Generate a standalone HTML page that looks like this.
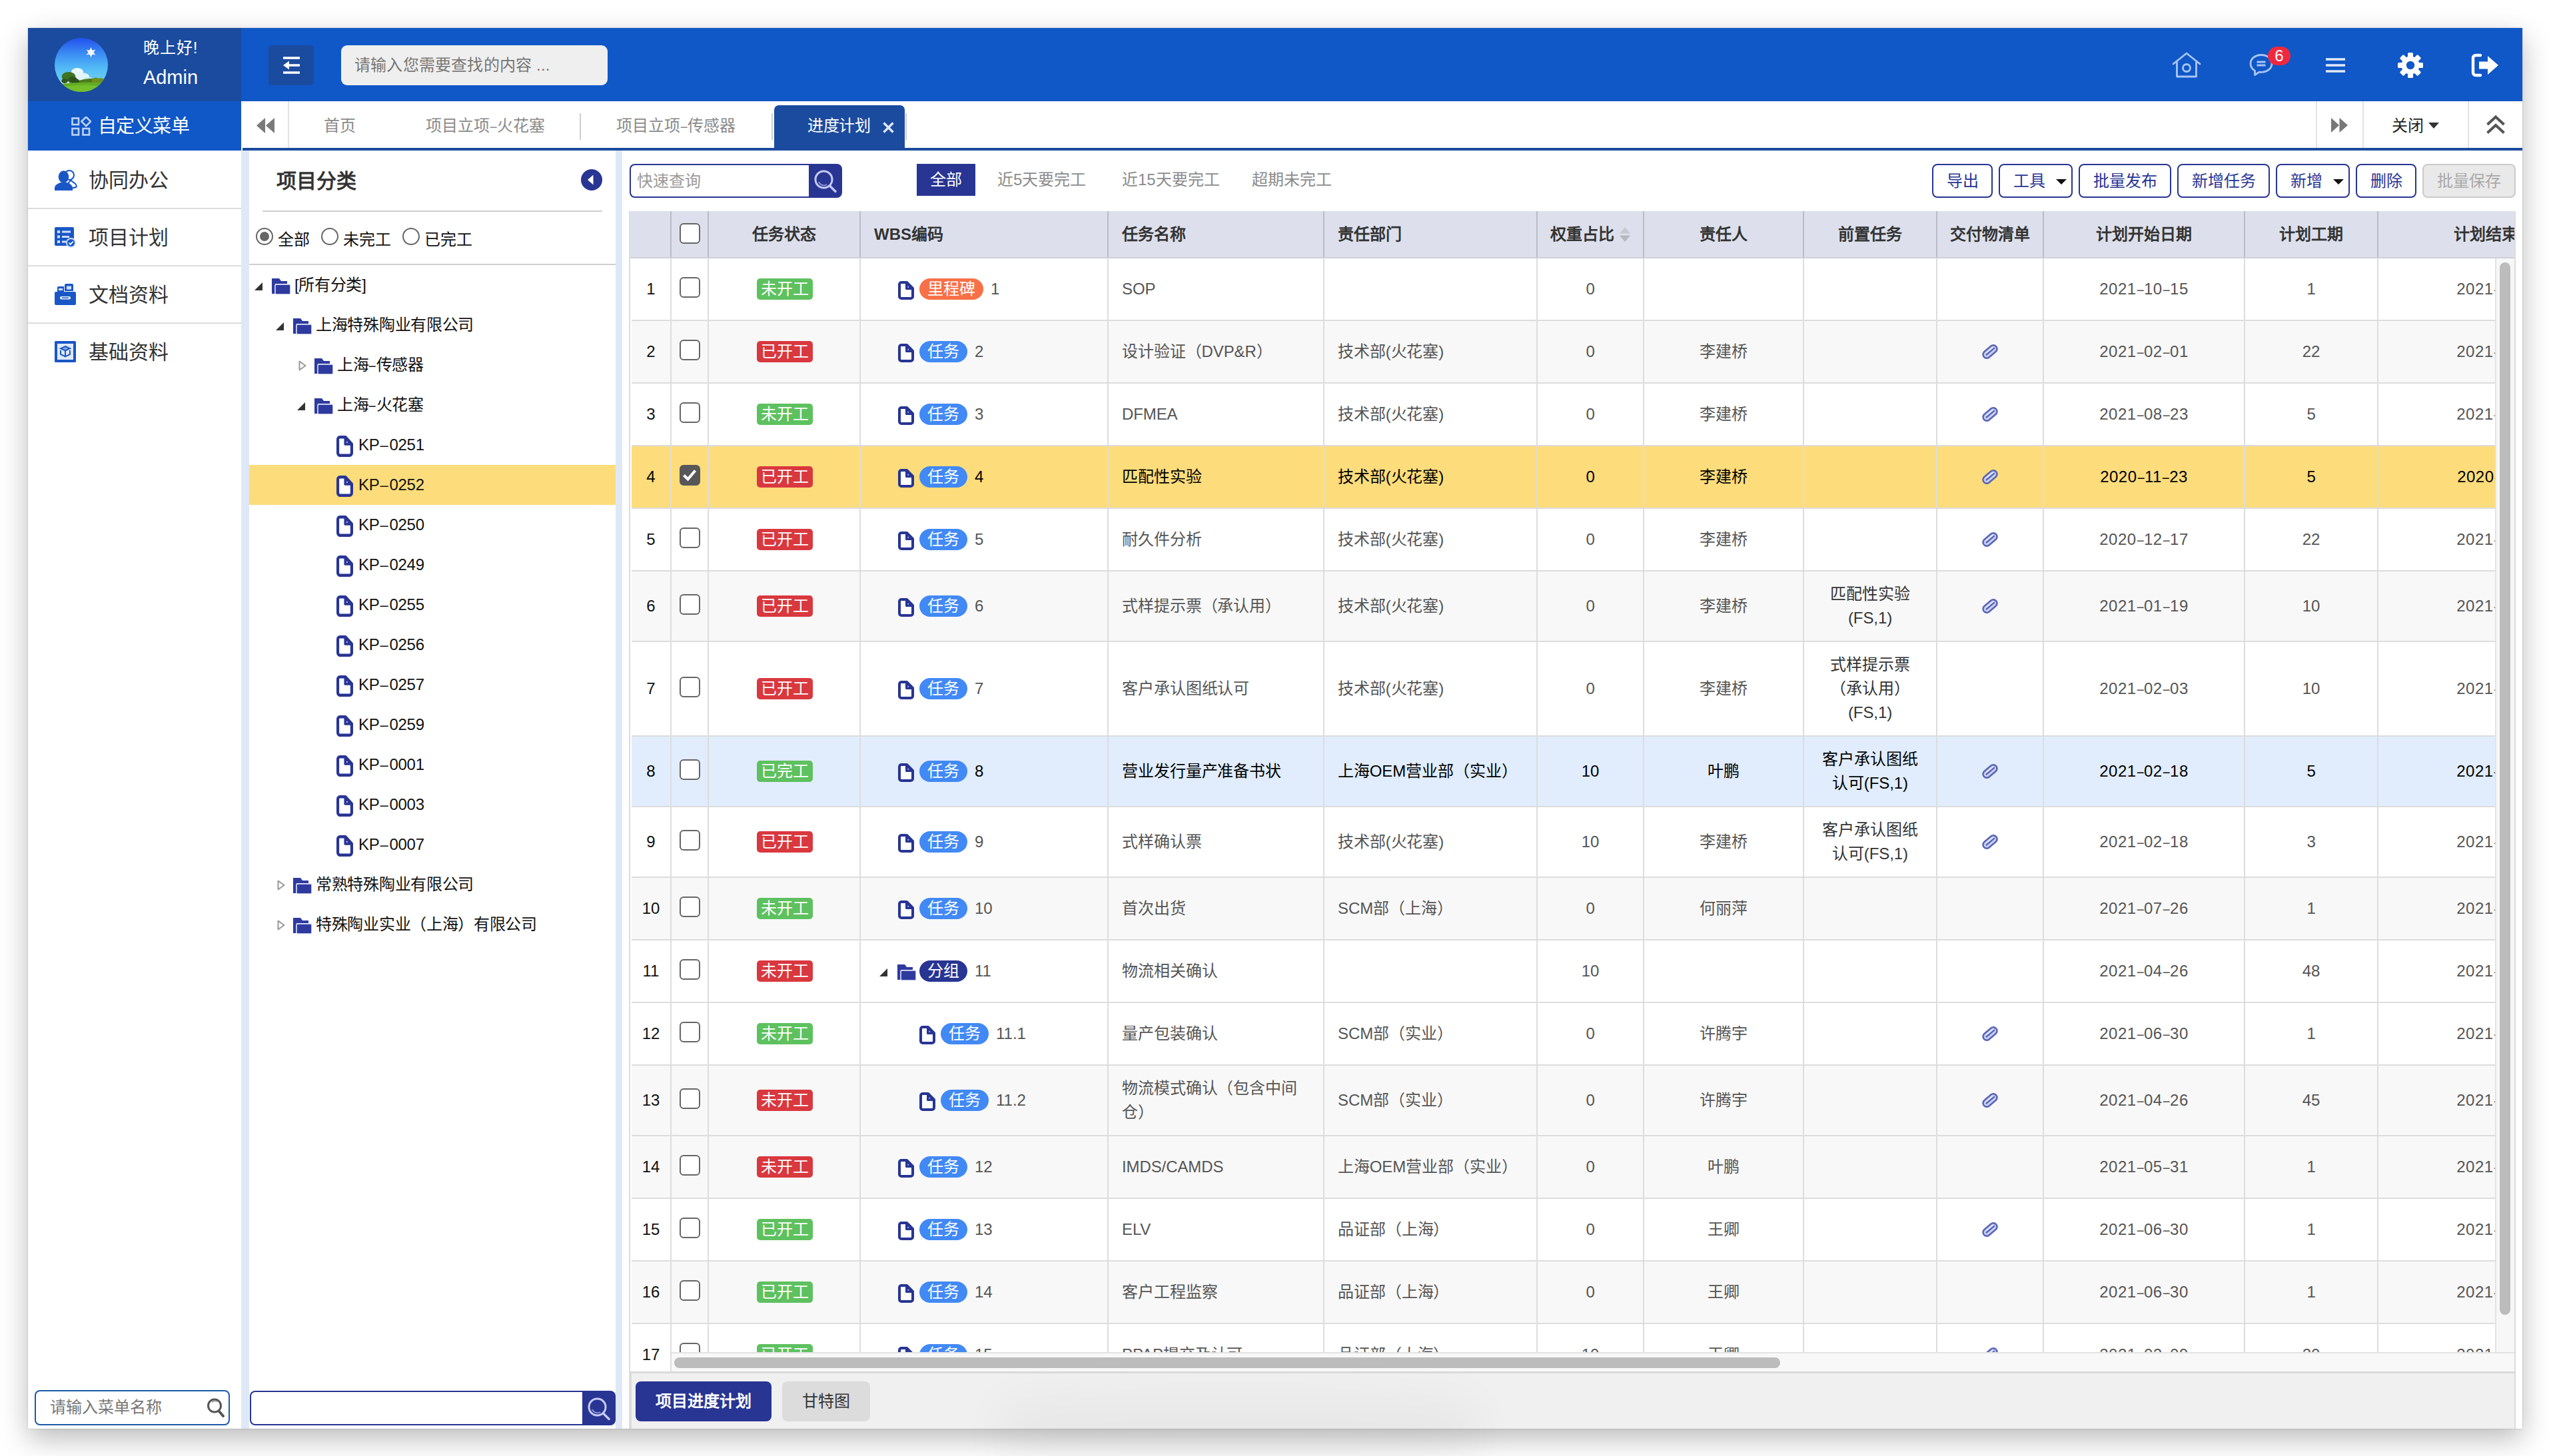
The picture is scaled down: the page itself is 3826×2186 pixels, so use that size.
<!DOCTYPE html>
<html lang="zh-CN">
<head>
<meta charset="utf-8">
<title>进度计划</title>
<style>
*{box-sizing:border-box;margin:0;padding:0}
html,body{width:3826px;height:2186px;overflow:hidden;background:#fff}
body{position:relative;font-family:"Liberation Sans",sans-serif;font-size:24px;color:#333;line-height:1.2;-webkit-font-smoothing:antialiased}
.abs{position:absolute}
.d{display:inline-block;transform:scaleX(.74);margin:0 -1px;letter-spacing:0}
#shadow{position:absolute;left:42px;top:42px;width:3744px;height:2103px;background:#fff;box-shadow:0 15px 40px rgba(0,0,0,.27),0 0 2px rgba(0,0,0,.22)}
#blob{position:absolute;left:1560px;top:2150px;width:600px;height:10px;border-radius:50%;background:rgba(0,0,0,.035);box-shadow:0 0 70px 60px rgba(0,0,0,.035);z-index:5;pointer-events:none}
#win{position:absolute;left:0;top:0;width:3826px;height:2186px;clip-path:inset(42px 40px 41px 42px)}
/* header */
#hdL{left:42px;top:42px;width:320px;height:110px;background:#1b4b9f}
#hdR{left:362px;top:42px;width:3424px;height:110px;background:#1057c7}
#avatar{left:82px;top:57px;width:80px;height:81px}
.hello{left:176px;width:160px;text-align:center;color:#fff;white-space:nowrap}
#collapse{left:403px;top:68px;width:68px;height:60px;background:#1b4b9f;border-radius:5px}
#gsearch{left:512px;top:68px;width:400px;height:60px;background:#efefef;border-radius:9px;color:#767676;font-size:24px;line-height:60px;padding-left:20px;white-space:nowrap;overflow:hidden;letter-spacing:.2px}
/* custom menu bar */
#cmenu{left:42px;top:152px;width:320px;height:74px;background:#1057c7;color:#fff;font-size:28px;line-height:74px;white-space:nowrap}
/* sidebar */
#side{left:42px;top:226px;width:320px;height:1919px;background:#fff}
.mi{position:absolute;left:0;width:320px;height:86px;border-bottom:2px solid #dcdcdc}
.mi svg{position:absolute;left:40px;top:26px}
.mi span{position:absolute;left:91px;top:0;line-height:86px;font-size:30px;color:#333;white-space:nowrap}
#sidesearch{left:52px;top:2087px;width:293px;height:53px;border:2px solid #1c5aa8;border-radius:8px;background:#fff;color:#777;font-size:24px;line-height:48px;padding-left:21px;white-space:nowrap;overflow:hidden}
/* tabs */
#tabbar{left:362px;top:152px;width:3424px;height:70px;background:#fff}
#tabline{left:364px;top:222px;width:3422px;height:4px;background:#1b4b9f}
.vsep{position:absolute;width:2px;background:#e3e3e3}
.tab{position:absolute;top:152px;height:70px;line-height:74px;font-size:24px;color:#8a8a8a;white-space:nowrap}
#tabact{left:1162px;top:158px;width:196px;height:66px;background:#1b4b9f;border-radius:7px 7px 0 0}
/* gutter + tree */
#gutter{left:362px;top:226px;width:572px;height:1919px;background:#dfe8f6}
#treep{left:374px;top:226px;width:550px;height:1919px;background:#fff}
#ttitle{left:415px;top:252px;font-size:30px;font-weight:bold;color:#333;line-height:40px;white-space:nowrap}
.hr{position:absolute;height:2px;background:#cfcfcf}
.radio{position:absolute;top:342px;width:26px;height:26px;border:2px solid #666;border-radius:50%;background:#fff}
.radio.on:after{content:"";position:absolute;left:4px;top:4px;width:14px;height:14px;border-radius:50%;background:#666}
.rl{position:absolute;top:345px;line-height:30px;font-size:24px;color:#111;white-space:nowrap}
#tree{left:374px;top:398px;width:550px;height:1030px}
.tr{position:relative;height:60px;width:550px}
.tr.sel{background:#fddc7b}
.ta,.ti{position:absolute;line-height:0}
.tt{position:absolute;top:0;line-height:60px;font-size:24px;color:#111;white-space:nowrap;letter-spacing:-.3px}
.tt.k{letter-spacing:-.3px}
.d2{display:inline-block;transform:scaleX(.92);margin:0 1px}
.sbox{position:absolute;border:2px solid #283593;border-radius:8px 0 0 8px;background:#fff;border-right:none}
.sbtn{position:absolute;background:#283593;border-radius:0 8px 8px 0}
/* main */
#main{left:934px;top:226px;width:2852px;height:1919px;background:#fff}
.btn{position:absolute;top:246px;height:51px;border:2px solid #283593;border-radius:8px;color:#283593;font-size:24px;line-height:47px;text-align:center;white-space:nowrap;background:#fff}
.btn.cb2{text-align:left;padding-left:20px}
.btn.dis{border-color:#cacaca;background:#e9e9e9;color:#a9a9a9}
.caret{display:inline-block;width:0;height:0;border-left:8px solid transparent;border-right:8px solid transparent;border-top:8px solid #111;vertical-align:middle;margin-left:16px;margin-top:-2px}
.flt{position:absolute;top:246px;line-height:48px;font-size:24px;color:#8b8b8b;white-space:nowrap}
#fall{left:1376px;top:246px;width:88px;height:48px;background:#283593;color:#fff;text-align:center;line-height:48px;font-size:24px}
/* grid */
#grid{left:946px;top:317px;width:2830px;height:1745px;background:#f8f8f8;overflow:hidden;border-right:2px solid #dcdcdc}
#ghead{position:absolute;left:0;top:0;width:2830px;height:71px;background:#dde0ec;display:flex;border-bottom:2px solid #cfd1d8}
.h{height:69px;border-right:2px solid #b9bcc7;font-weight:bold;font-size:24px;color:#333;line-height:70px;text-align:center;white-space:nowrap;flex:none;overflow:hidden}
.h.l{text-align:left;padding-left:20px}
#gnum{position:absolute;left:0;top:71px;width:62px;height:1672px;background:#fff;padding-left:2px;overflow:hidden}
.nrow{border-bottom:2px solid #ddd;border-right:2px solid #ddd;display:flex;align-items:center;justify-content:center;color:#111;font-size:24px;background:#fff}
#gbody{position:absolute;left:62px;top:71px;width:2737px;height:1642px;overflow:hidden;background:#fff}
.row{display:flex;width:2932px;border-bottom:2px solid #ddd;background:#fff;color:#555}
.alt{background:#f8f8f8}
.row.sel,.nrow.sel{background:#fddc7b;color:#000}
.row.hov,.nrow.hov{background:#e1edfd;color:#000}
.c{flex:none;height:100%;border-right:2px solid #ddd;display:flex;align-items:center;justify-content:center;font-size:24px;white-space:nowrap;overflow:hidden;letter-spacing:-.1px}
.c.l{justify-content:flex-start;padding-left:20px;line-height:36px}
.c1{width:56px}.c2{width:228px;padding-left:2px}.c3{width:372px;justify-content:flex-start}.c4{width:324px}.c5{width:320px}.c6{width:160px}.c7{width:240px}.c8{width:200px}.c9{width:160px}.c10{width:302px;letter-spacing:.5px}.c11{width:200px}.c12{width:370px;letter-spacing:.5px}
.pre{line-height:36px;text-align:center;color:#333}
.sel .pre,.hov .pre{color:#000}
.cb{display:block;width:31px;height:31px;border:2px solid #666;border-radius:6px;background:#fff;margin-top:-5px;margin-left:1px}
.cb.on{background:#585858;border-color:#585858;position:relative}
.cb.on svg{position:absolute;left:-2px;top:-2px}
.tag{display:block;width:84px;height:32px;border-radius:5px;color:#fff;font-size:24px;line-height:32px;text-align:center;letter-spacing:0;margin-top:0}
.tag.g{background:#5ec15f}.tag.r{background:#d9383f}
.pill{display:block;height:32px;border-radius:16px;color:#fff;font-size:24px;line-height:32px;text-align:center;letter-spacing:0;margin-left:8px;margin-top:0;flex:none}
.pill.ms{width:96px;background:#f87047}.pill.tk{width:72px;background:#4189f5}.pill.gp{width:72px;background:#283593}
.wn{margin-left:11px;margin-top:0;letter-spacing:0}
.wdoc{flex:none;margin-top:4px}
.wfold{flex:none;margin-top:4px;margin-left:14px;margin-right:-3px}
.wa{display:block;width:12px;height:12px;line-height:0;margin-left:-25px;margin-top:4px;flex:none}
.clip{flex:none}
#vscroll{position:absolute;left:2799px;top:71px;width:31px;height:1642px;background:#f7f7f7;border-left:2px solid #e3e3e3}
#vthumb{position:absolute;left:5px;top:6px;width:16px;height:1580px;border-radius:8px;background:#bcbcbc}
#hscroll{position:absolute;left:62px;top:1713px;width:2768px;height:30px;background:#f8f8f8;border-top:2px solid #e3e3e3}
#hthumb{position:absolute;left:4px;top:6px;width:1660px;height:16px;border-radius:8px;background:#bcbcbc}
#gbot{position:absolute;left:0;top:1742px;width:2830px;height:3px;background:#dadada}
/* bottom tabs */
#btabs{left:948px;top:2062px;width:2828px;height:83px;background:#f0f0f0;border-right:2px solid #dcdcdc}
#bt1{left:954px;top:2074px;width:204px;height:60px;background:#283593;border-radius:8px;color:#fff;font-weight:bold;font-size:24px;line-height:60px;text-align:center;white-space:nowrap}
#bt2{left:1174px;top:2074px;width:132px;height:60px;background:#dcdcdc;border-radius:8px;color:#333;font-size:24px;line-height:60px;text-align:center;white-space:nowrap}
</style>
</head>
<body>
<div id="shadow"></div>
<div id="blob"></div>
<div id="win">
<!-- header -->
<div id="hdL" class="abs"></div>
<div id="hdR" class="abs"></div>
<svg id="avatar" class="abs" viewBox="0 0 80 81" preserveAspectRatio="none">
<defs><linearGradient id="sky" x1="0" y1="0" x2="0" y2="1"><stop offset="0" stop-color="#2350ee"/><stop offset=".28" stop-color="#3a8af3"/><stop offset=".55" stop-color="#52b9f5"/><stop offset=".8" stop-color="#6ccff6"/></linearGradient><clipPath id="cc"><ellipse cx="40" cy="40.500" rx="40" ry="40.500"/></clipPath></defs>
<g clip-path="url(#cc)"><rect width="80" height="81" fill="url(#sky)"/>
<ellipse cx="34" cy="51" rx="9" ry="6" fill="#eaf8fd"/><ellipse cx="40" cy="58" rx="12" ry="6" fill="#e2f5fc"/><ellipse cx="50" cy="62" rx="7" ry="3.500" fill="#c9ecfa"/>
<ellipse cx="16" cy="65" rx="7" ry="4" fill="#f2fafd"/>
<path d="M30 66Q50 58 78 62V70H30z" fill="#4c7a1e"/>
<path d="M56 62q5-5 10-1q5-3 9 2v5H56z" fill="#6f8f1f"/>
<ellipse cx="21" cy="58" rx="10.500" ry="7" fill="#3f7423"/><ellipse cx="27" cy="63" rx="7" ry="5" fill="#2e5a1b"/><ellipse cx="15" cy="64.500" rx="5" ry="3.500" fill="#2e5a1b"/><ellipse cx="31" cy="65" rx="6" ry="4" fill="#2c531a"/>
<path d="M0 70Q40 64 80 68V81H0z" fill="#63ad22"/>
<path d="M8 74Q40 68 74 73V81H8z" fill="#74bf2a"/>
<g opacity=".96"><path d="M54.500 14l2 4.600 5-.9-3.200 3.900 3.200 3.900-5-.9-2 4.600-2-4.600-5 .9 3.200-3.900-3.200-3.900 5 .9z" fill="#fff"/><circle cx="54.500" cy="21.600" r="3.400" fill="#fff"/></g></g></svg>
<div class="abs hello" style="top:56px;font-size:24px;line-height:32px;letter-spacing:1px">晚上好!</div>
<div class="abs hello" style="top:98px;font-size:29px;line-height:36px">Admin</div>
<div id="collapse" class="abs"><svg class="abs" style="left:22px;top:17px" width="25" height="26" viewBox="0 0 25 26"><path d="M0 2H25M9 13H25M0 24H25" stroke="#fff" stroke-width="3.6" fill="none"/><path d="M0 13L9 6.500V19.500z" fill="#fff"/></svg></div>
<div id="gsearch" class="abs">请输入您需要查找的内容 ...</div>
<!-- header icons -->
<svg class="abs" style="left:3260px;top:78px" width="44" height="40" viewBox="0 0 44 40"><path d="M2 18L22 2L42 18M7.500 15V37H36.500V15" fill="none" stroke="#a9c5f3" stroke-width="2.800" stroke-linejoin="round" stroke-linecap="round"/><circle cx="22" cy="24" r="5.500" fill="none" stroke="#a9c5f3" stroke-width="2.800"/></svg>
<svg class="abs" style="left:3376px;top:80px" width="36" height="36" viewBox="0 0 36 36"><path d="M18 2.500C9 2.500 2 8 2 15.500c0 4.500 2.600 8.300 6.500 10.600L8.500 32.500l6.500-4.400c1 .2 2 .3 3 .3 9 0 16-5.500 16-13S27 2.500 18 2.500z" fill="none" stroke="#a9c5f3" stroke-width="2.800" stroke-linejoin="round"/><path d="M11.500 13H24.500M11.500 18H24.500" stroke="#a9c5f3" stroke-width="2.800"/></svg>
<div class="abs" style="left:3404px;top:70px;width:34px;height:28px;border-radius:14px;background:#f0283f;color:#fff;font-size:24px;line-height:28px;text-align:center">6</div>
<svg class="abs" style="left:3491px;top:87px" width="29" height="22" viewBox="0 0 29 22"><path d="M0 2H29M0 11H29M0 20H29" stroke="#e1ebfb" stroke-width="3.400"/></svg>
<svg class="abs" style="left:3599px;top:79px" width="38" height="38" viewBox="0 0 38 38"><g fill="#fff"><circle cx="19" cy="19" r="13.500"/><g id="tooth"><rect x="15" y="0" width="8" height="10" rx="1.500"/></g><use href="#tooth" transform="rotate(45 19 19)"/><use href="#tooth" transform="rotate(90 19 19)"/><use href="#tooth" transform="rotate(135 19 19)"/><use href="#tooth" transform="rotate(180 19 19)"/><use href="#tooth" transform="rotate(225 19 19)"/><use href="#tooth" transform="rotate(270 19 19)"/><use href="#tooth" transform="rotate(315 19 19)"/></g><circle cx="19" cy="19" r="6.200" fill="#1057c7"/></svg>
<svg class="abs" style="left:3709px;top:80px" width="42" height="36" viewBox="0 0 42 36"><path d="M14 3H7a4 4 0 0 0-4 4V29a4 4 0 0 0 4 4H14" fill="none" stroke="#fff" stroke-width="4.400" stroke-linecap="round"/><path d="M12 12.500H25V4L41 18L25 32V23.500H12z" fill="#fff"/></svg>
<!-- custom menu -->
<div id="cmenu" class="abs"><svg class="abs" style="left:65px;top:23px" width="30" height="30" viewBox="0 0 30 30"><g fill="none" stroke="#bcd2f6" stroke-width="2.600"><rect x="1.500" y="2.500" width="9.500" height="9.500"/><rect x="1.500" y="18" width="9.500" height="9.500"/><rect x="17.500" y="18" width="9.500" height="9.500"/><path d="M22.200 0.500L29 7.300L22.200 14.100L15.400 7.300z"/></g></svg><span class="abs" style="left:105px;top:1px;letter-spacing:-.6px">自定义菜单</span></div>
<!-- sidebar -->
<div id="side" class="abs">
<div class="mi" style="top:2px"><svg width="34" height="32" viewBox="0 0 34 32"><g fill="#fff" stroke="#1a57c6" stroke-width="2"><circle cx="22" cy="9" r="7"/><path d="M24.500 16.500c1.500 3 6.500 3.500 8 7.500.4 1.200.2 2.300-.3 3l-6 1.500-5.500-8z"/></g><g fill="#1a57c6"><ellipse cx="13.500" cy="11.500" rx="7.800" ry="9.200"/><path d="M0 32V28c0-4 5-6.500 9-8h9c4 1.500 9 4 9 8v4z"/></g></svg><span>协同办公</span></div>
<div class="mi" style="top:88px"><svg width="32" height="32" viewBox="0 0 32 32"><rect x="0" y="1" width="29" height="28" rx="2" fill="#1a57c6"/><g fill="#cfe0fb"><rect x="4" y="6" width="4" height="4"/><rect x="11" y="6.500" width="13" height="3"/><rect x="4" y="13.500" width="4" height="4"/><rect x="11" y="14" width="11" height="3"/><rect x="4" y="21" width="4" height="4"/><rect x="11" y="21.500" width="6" height="3"/></g><circle cx="24.500" cy="24.500" r="7.500" fill="#cfe0fb"/><circle cx="24.500" cy="24.500" r="5.600" fill="#1a57c6"/><path d="M21.500 24.500l2.300 2.400 4-4.400" fill="none" stroke="#fff" stroke-width="1.800"/></svg><span>项目计划</span></div>
<div class="mi" style="top:174px"><svg width="32" height="32" viewBox="0 0 32 32"><g fill="#1a57c6"><path d="M4 6a2 2 0 0 1 2-2h8v8H4z"/><path d="M15 2a2 2 0 0 1 2-2h9a2 2 0 0 1 2 2v9H15z"/><rect x="0" y="12" width="32" height="20" rx="2"/></g><rect x="6" y="7" width="6" height="3" fill="#cfe0fb"/><rect x="18" y="3.500" width="7" height="5" fill="#cfe0fb"/><rect x="8" y="19" width="16" height="4.500" rx="2.200" fill="#e8f0fd"/><rect x="11" y="20.500" width="10" height="1.500" fill="#1a57c6"/></svg><span>文档资料</span></div>
<div class="mi" style="top:260px;border-bottom:none"><svg width="32" height="32" viewBox="0 0 32 32"><rect x="0" y="0" width="32" height="32" rx="1.500" fill="#1a57c6"/><rect x="4" y="4" width="24" height="24" fill="#dfeafc"/><g fill="none" stroke="#1a57c6" stroke-width="2"><path d="M16 8l7 3.200-7 3.200-7-3.200z" fill="#7fa6ea"/><path d="M9 14v6l7 3.500 7-3.500v-6"/><path d="M16 14.500V23"/></g></svg><span>基础资料</span></div>
</div>
<div id="sidesearch" class="abs">请输入菜单名称<svg class="abs" style="left:256px;top:9px" width="28" height="30" viewBox="0 0 28 30"><circle cx="12" cy="12.500" r="9.500" fill="none" stroke="#555" stroke-width="3"/><path d="M8 7.500a6.500 6.500 0 0 1 8-1" fill="none" stroke="#999" stroke-width="1.600"/><path d="M18.500 20.500L25 28" stroke="#555" stroke-width="4" stroke-linecap="round"/></svg></div>
<!-- tabs -->
<div id="tabbar" class="abs"></div>
<div id="tabline" class="abs"></div>
<svg class="abs" style="left:385px;top:177px" width="28" height="23" viewBox="0 0 28 23"><path d="M13 0V23L0 11.500zM27 0V23L14 11.500z" fill="#7a7a7a"/></svg>
<div class="vsep" style="left:432px;top:152px;height:70px"></div>
<div class="tab" style="left:486px">首页</div>
<div class="tab" style="left:639px">项目立项<span class="d">–</span>火花塞</div>
<div class="vsep" style="left:870px;top:170px;height:40px;background:#cfcfcf"></div>
<div class="tab" style="left:925px">项目立项<span class="d">–</span>传感器</div>
<div class="vsep" style="left:1158px;top:170px;height:40px;background:#cfcfcf"></div>
<div id="tabact" class="abs"></div>
<div class="tab" style="left:1212px;color:#fff;letter-spacing:-.4px">进度计划</div>
<svg class="abs" style="left:1325px;top:183px" width="17" height="17" viewBox="0 0 17 17"><path d="M1.500 1.500L15.500 15.500M15.500 1.500L1.500 15.500" stroke="#dfe8f8" stroke-width="3.400"/></svg>
<div class="vsep" style="left:1359px;top:170px;height:40px;background:#cfcfcf"></div>
<div class="vsep" style="left:3476px;top:152px;height:70px"></div>
<svg class="abs" style="left:3499px;top:177px" width="25" height="22" viewBox="0 0 25 22"><path d="M0 0V22L12 11zM12.500 0V22L25 11z" fill="#777"/></svg>
<div class="vsep" style="left:3546px;top:152px;height:70px"></div>
<div class="tab" style="left:3590px;color:#222">关闭</div>
<div class="abs" style="left:3645px;top:184px;width:0;height:0;border-left:8.500px solid transparent;border-right:8.500px solid transparent;border-top:9px solid #333"></div>
<div class="vsep" style="left:3704px;top:152px;height:70px"></div>
<svg class="abs" style="left:3731px;top:172px" width="30" height="30" viewBox="0 0 30 30"><path d="M2.500 15L15 3.500L27.500 15M2.500 27.500L15 16L27.500 27.500" fill="none" stroke="#555" stroke-width="4"/></svg>
<!-- gutter + tree panel -->
<div id="gutter" class="abs"></div>
<div id="treep" class="abs"></div>
<div id="ttitle" class="abs">项目分类</div>
<svg class="abs" style="left:872px;top:254px" width="32" height="32" viewBox="0 0 32 32"><circle cx="16" cy="16" r="16" fill="#283593"/><path d="M18.500 8.500V23.500L10 16z" fill="#fff"/></svg>
<div class="hr" style="left:394px;top:316px;width:510px"></div>
<span class="radio on" style="left:384px"></span><span class="rl" style="left:417px">全部</span>
<span class="radio" style="left:482px"></span><span class="rl" style="left:515px">未完工</span>
<span class="radio" style="left:604px"></span><span class="rl" style="left:637px">已完工</span>
<div class="hr" style="left:374px;top:396px;width:550px"></div>
<div id="tree" class="abs">
<div class="tr "><span class="ta" style="left:8px;top:26px"><svg class="arr" width="12" height="12" viewBox="0 0 12 12"><path d="M12 0V12H0z" fill="#333"/></svg></span><span class="ti" style="left:33px;top:20px"><svg class="fold" width="29" height="24" viewBox="0 0 29 24"><path d="M1 0H12L15 4H24V8H6V23H1z" fill="#2e3a9e"/><rect x="6" y="9" width="23" height="15" rx="1.5" fill="#2e3a9e" stroke="#dfe4fb" stroke-width="1.6"/></svg></span><span class="tt" style="left:68px">[所有分类]</span></div>
<div class="tr "><span class="ta" style="left:40px;top:26px"><svg class="arr" width="12" height="12" viewBox="0 0 12 12"><path d="M12 0V12H0z" fill="#333"/></svg></span><span class="ti" style="left:65px;top:20px"><svg class="fold" width="29" height="24" viewBox="0 0 29 24"><path d="M1 0H12L15 4H24V8H6V23H1z" fill="#2e3a9e"/><rect x="6" y="9" width="23" height="15" rx="1.5" fill="#2e3a9e" stroke="#dfe4fb" stroke-width="1.6"/></svg></span><span class="tt" style="left:100px">上海特殊陶业有限公司</span></div>
<div class="tr "><span class="ta" style="left:74px;top:23px"><svg class="arr" width="12" height="16" viewBox="0 0 12 16"><path d="M1.5 1.5L10.5 8L1.5 14.5z" fill="none" stroke="#999" stroke-width="2" stroke-linejoin="round"/></svg></span><span class="ti" style="left:97px;top:20px"><svg class="fold" width="29" height="24" viewBox="0 0 29 24"><path d="M1 0H12L15 4H24V8H6V23H1z" fill="#2e3a9e"/><rect x="6" y="9" width="23" height="15" rx="1.5" fill="#2e3a9e" stroke="#dfe4fb" stroke-width="1.6"/></svg></span><span class="tt" style="left:132px">上海<span class="d">–</span>传感器</span></div>
<div class="tr "><span class="ta" style="left:72px;top:26px"><svg class="arr" width="12" height="12" viewBox="0 0 12 12"><path d="M12 0V12H0z" fill="#333"/></svg></span><span class="ti" style="left:97px;top:20px"><svg class="fold" width="29" height="24" viewBox="0 0 29 24"><path d="M1 0H12L15 4H24V8H6V23H1z" fill="#2e3a9e"/><rect x="6" y="9" width="23" height="15" rx="1.5" fill="#2e3a9e" stroke="#dfe4fb" stroke-width="1.6"/></svg></span><span class="tt" style="left:132px">上海<span class="d">–</span>火花塞</span></div>
<div class="tr "><span class="ti" style="left:131px;top:16px"><svg class="doc" width="25" height="32" preserveAspectRatio="none" viewBox="0 0 24 28"><path d="M5 2H13L22 11V23a3 3 0 0 1-3 3H5a3 3 0 0 1-3-3V5a3 3 0 0 1 3-3z" fill="#fff" stroke="#283593" stroke-width="4" stroke-linejoin="round"/><path d="M12.500 3V11.500H21z" fill="#283593" stroke="#283593" stroke-width="3" stroke-linejoin="round"/><circle cx="15.200" cy="8.800" r="1.100" fill="#aab4f5"/></svg></span><span class="tt k" style="left:164px">KP<span class="d2">–</span>0251</span></div>
<div class="tr sel"><span class="ti" style="left:131px;top:16px"><svg class="doc" width="25" height="32" preserveAspectRatio="none" viewBox="0 0 24 28"><path d="M5 2H13L22 11V23a3 3 0 0 1-3 3H5a3 3 0 0 1-3-3V5a3 3 0 0 1 3-3z" fill="#fff" stroke="#283593" stroke-width="4" stroke-linejoin="round"/><path d="M12.500 3V11.500H21z" fill="#283593" stroke="#283593" stroke-width="3" stroke-linejoin="round"/><circle cx="15.200" cy="8.800" r="1.100" fill="#aab4f5"/></svg></span><span class="tt k" style="left:164px">KP<span class="d2">–</span>0252</span></div>
<div class="tr "><span class="ti" style="left:131px;top:16px"><svg class="doc" width="25" height="32" preserveAspectRatio="none" viewBox="0 0 24 28"><path d="M5 2H13L22 11V23a3 3 0 0 1-3 3H5a3 3 0 0 1-3-3V5a3 3 0 0 1 3-3z" fill="#fff" stroke="#283593" stroke-width="4" stroke-linejoin="round"/><path d="M12.500 3V11.500H21z" fill="#283593" stroke="#283593" stroke-width="3" stroke-linejoin="round"/><circle cx="15.200" cy="8.800" r="1.100" fill="#aab4f5"/></svg></span><span class="tt k" style="left:164px">KP<span class="d2">–</span>0250</span></div>
<div class="tr "><span class="ti" style="left:131px;top:16px"><svg class="doc" width="25" height="32" preserveAspectRatio="none" viewBox="0 0 24 28"><path d="M5 2H13L22 11V23a3 3 0 0 1-3 3H5a3 3 0 0 1-3-3V5a3 3 0 0 1 3-3z" fill="#fff" stroke="#283593" stroke-width="4" stroke-linejoin="round"/><path d="M12.500 3V11.500H21z" fill="#283593" stroke="#283593" stroke-width="3" stroke-linejoin="round"/><circle cx="15.200" cy="8.800" r="1.100" fill="#aab4f5"/></svg></span><span class="tt k" style="left:164px">KP<span class="d2">–</span>0249</span></div>
<div class="tr "><span class="ti" style="left:131px;top:16px"><svg class="doc" width="25" height="32" preserveAspectRatio="none" viewBox="0 0 24 28"><path d="M5 2H13L22 11V23a3 3 0 0 1-3 3H5a3 3 0 0 1-3-3V5a3 3 0 0 1 3-3z" fill="#fff" stroke="#283593" stroke-width="4" stroke-linejoin="round"/><path d="M12.500 3V11.500H21z" fill="#283593" stroke="#283593" stroke-width="3" stroke-linejoin="round"/><circle cx="15.200" cy="8.800" r="1.100" fill="#aab4f5"/></svg></span><span class="tt k" style="left:164px">KP<span class="d2">–</span>0255</span></div>
<div class="tr "><span class="ti" style="left:131px;top:16px"><svg class="doc" width="25" height="32" preserveAspectRatio="none" viewBox="0 0 24 28"><path d="M5 2H13L22 11V23a3 3 0 0 1-3 3H5a3 3 0 0 1-3-3V5a3 3 0 0 1 3-3z" fill="#fff" stroke="#283593" stroke-width="4" stroke-linejoin="round"/><path d="M12.500 3V11.500H21z" fill="#283593" stroke="#283593" stroke-width="3" stroke-linejoin="round"/><circle cx="15.200" cy="8.800" r="1.100" fill="#aab4f5"/></svg></span><span class="tt k" style="left:164px">KP<span class="d2">–</span>0256</span></div>
<div class="tr "><span class="ti" style="left:131px;top:16px"><svg class="doc" width="25" height="32" preserveAspectRatio="none" viewBox="0 0 24 28"><path d="M5 2H13L22 11V23a3 3 0 0 1-3 3H5a3 3 0 0 1-3-3V5a3 3 0 0 1 3-3z" fill="#fff" stroke="#283593" stroke-width="4" stroke-linejoin="round"/><path d="M12.500 3V11.500H21z" fill="#283593" stroke="#283593" stroke-width="3" stroke-linejoin="round"/><circle cx="15.200" cy="8.800" r="1.100" fill="#aab4f5"/></svg></span><span class="tt k" style="left:164px">KP<span class="d2">–</span>0257</span></div>
<div class="tr "><span class="ti" style="left:131px;top:16px"><svg class="doc" width="25" height="32" preserveAspectRatio="none" viewBox="0 0 24 28"><path d="M5 2H13L22 11V23a3 3 0 0 1-3 3H5a3 3 0 0 1-3-3V5a3 3 0 0 1 3-3z" fill="#fff" stroke="#283593" stroke-width="4" stroke-linejoin="round"/><path d="M12.500 3V11.500H21z" fill="#283593" stroke="#283593" stroke-width="3" stroke-linejoin="round"/><circle cx="15.200" cy="8.800" r="1.100" fill="#aab4f5"/></svg></span><span class="tt k" style="left:164px">KP<span class="d2">–</span>0259</span></div>
<div class="tr "><span class="ti" style="left:131px;top:16px"><svg class="doc" width="25" height="32" preserveAspectRatio="none" viewBox="0 0 24 28"><path d="M5 2H13L22 11V23a3 3 0 0 1-3 3H5a3 3 0 0 1-3-3V5a3 3 0 0 1 3-3z" fill="#fff" stroke="#283593" stroke-width="4" stroke-linejoin="round"/><path d="M12.500 3V11.500H21z" fill="#283593" stroke="#283593" stroke-width="3" stroke-linejoin="round"/><circle cx="15.200" cy="8.800" r="1.100" fill="#aab4f5"/></svg></span><span class="tt k" style="left:164px">KP<span class="d2">–</span>0001</span></div>
<div class="tr "><span class="ti" style="left:131px;top:16px"><svg class="doc" width="25" height="32" preserveAspectRatio="none" viewBox="0 0 24 28"><path d="M5 2H13L22 11V23a3 3 0 0 1-3 3H5a3 3 0 0 1-3-3V5a3 3 0 0 1 3-3z" fill="#fff" stroke="#283593" stroke-width="4" stroke-linejoin="round"/><path d="M12.500 3V11.500H21z" fill="#283593" stroke="#283593" stroke-width="3" stroke-linejoin="round"/><circle cx="15.200" cy="8.800" r="1.100" fill="#aab4f5"/></svg></span><span class="tt k" style="left:164px">KP<span class="d2">–</span>0003</span></div>
<div class="tr "><span class="ti" style="left:131px;top:16px"><svg class="doc" width="25" height="32" preserveAspectRatio="none" viewBox="0 0 24 28"><path d="M5 2H13L22 11V23a3 3 0 0 1-3 3H5a3 3 0 0 1-3-3V5a3 3 0 0 1 3-3z" fill="#fff" stroke="#283593" stroke-width="4" stroke-linejoin="round"/><path d="M12.500 3V11.500H21z" fill="#283593" stroke="#283593" stroke-width="3" stroke-linejoin="round"/><circle cx="15.200" cy="8.800" r="1.100" fill="#aab4f5"/></svg></span><span class="tt k" style="left:164px">KP<span class="d2">–</span>0007</span></div>
<div class="tr "><span class="ta" style="left:42px;top:23px"><svg class="arr" width="12" height="16" viewBox="0 0 12 16"><path d="M1.5 1.5L10.5 8L1.5 14.5z" fill="none" stroke="#999" stroke-width="2" stroke-linejoin="round"/></svg></span><span class="ti" style="left:65px;top:20px"><svg class="fold" width="29" height="24" viewBox="0 0 29 24"><path d="M1 0H12L15 4H24V8H6V23H1z" fill="#2e3a9e"/><rect x="6" y="9" width="23" height="15" rx="1.5" fill="#2e3a9e" stroke="#dfe4fb" stroke-width="1.6"/></svg></span><span class="tt" style="left:100px">常熟特殊陶业有限公司</span></div>
<div class="tr "><span class="ta" style="left:42px;top:23px"><svg class="arr" width="12" height="16" viewBox="0 0 12 16"><path d="M1.5 1.5L10.5 8L1.5 14.5z" fill="none" stroke="#999" stroke-width="2" stroke-linejoin="round"/></svg></span><span class="ti" style="left:65px;top:20px"><svg class="fold" width="29" height="24" viewBox="0 0 29 24"><path d="M1 0H12L15 4H24V8H6V23H1z" fill="#2e3a9e"/><rect x="6" y="9" width="23" height="15" rx="1.5" fill="#2e3a9e" stroke="#dfe4fb" stroke-width="1.6"/></svg></span><span class="tt" style="left:100px">特殊陶业实业（上海）有限公司</span></div>
</div>
<div class="sbox" style="left:375px;top:2088px;width:499px;height:52px"></div>
<div class="sbtn" style="left:874px;top:2088px;width:50px;height:52px"><svg class="abs" style="left:7px;top:9px" width="36" height="36" viewBox="0 0 36 36"><circle cx="15.500" cy="15.500" r="12.500" fill="none" stroke="#c5caf3" stroke-width="3"/><path d="M8 19a8 8 0 0 0 12 4" fill="none" stroke="#8e97dd" stroke-width="1.800"/><path d="M24.500 25L33 33.500" stroke="#c5caf3" stroke-width="3.400" stroke-linecap="round"/></svg></div>
<!-- main -->
<div id="main" class="abs"></div>
<div class="sbox" style="left:945px;top:246px;width:269px;height:51px;color:#9a9a9a;font-size:24px;line-height:47px;padding-left:9px;white-space:nowrap;overflow:hidden">快速查询</div>
<div class="sbtn" style="left:1214px;top:246px;width:50px;height:51px"><svg class="abs" style="left:7px;top:8px" width="36" height="36" viewBox="0 0 36 36"><circle cx="15.500" cy="15.500" r="12.500" fill="none" stroke="#c5caf3" stroke-width="3"/><path d="M8 19a8 8 0 0 0 12 4" fill="none" stroke="#8e97dd" stroke-width="1.800"/><path d="M24.500 25L33 33.500" stroke="#c5caf3" stroke-width="3.400" stroke-linecap="round"/></svg></div>
<div id="fall" class="abs">全部</div>
<div class="flt" style="left:1497px">近5天要完工</div>
<div class="flt" style="left:1684px">近15天要完工</div>
<div class="flt" style="left:1879px">超期未完工</div>
<div class="btn" style="left:2900px;width:91px">导出</div>
<div class="btn cb2" style="left:3000px;width:111px">工具<span class="caret"></span></div>
<div class="btn" style="left:3120px;width:139px">批量发布</div>
<div class="btn" style="left:3268px;width:139px">新增任务</div>
<div class="btn cb2" style="left:3416px;width:111px">新增<span class="caret"></span></div>
<div class="btn" style="left:3536px;width:91px">删除</div>
<div class="btn dis" style="left:3636px;width:140px">批量保存</div>
<!-- grid -->
<div class="abs" style="left:944px;top:317px;width:4px;height:1828px;background:#dcdcdc"></div>
<div id="grid" class="abs">
<div id="ghead">
<div class="h" style="width:62px"></div>
<div class="h" style="width:56px"><span class="cb" style="margin:18px 0 0 12px"></span></div>
<div class="h" style="width:228px">任务状态</div>
<div class="h l" style="width:372px">WBS编码</div>
<div class="h l" style="width:324px">任务名称</div>
<div class="h l" style="width:320px">责任部门</div>
<div class="h" style="width:160px">权重占比<svg style="margin-left:7px;vertical-align:-4px" width="18" height="24" viewBox="0 0 18 24"><path d="M9 1L17 10.500H1z" fill="#c6c9d0"/><path d="M9 23L17 13.500H1z" fill="#b4b7bf"/></svg></div>
<div class="h" style="width:240px">责任人</div>
<div class="h" style="width:200px">前置任务</div>
<div class="h" style="width:160px">交付物清单</div>
<div class="h" style="width:302px">计划开始日期</div>
<div class="h" style="width:200px">计划工期</div>
<div class="h" style="width:370px;border-right:none">计划结束日期</div>
</div>
<div id="gnum">
<div class="nrow " style="height:94px">1</div>
<div class="nrow alt" style="height:94px">2</div>
<div class="nrow " style="height:94px">3</div>
<div class="nrow sel" style="height:94px">4</div>
<div class="nrow " style="height:94px">5</div>
<div class="nrow alt" style="height:106px">6</div>
<div class="nrow " style="height:142px">7</div>
<div class="nrow hov" style="height:106px">8</div>
<div class="nrow " style="height:106px">9</div>
<div class="nrow alt" style="height:94px">10</div>
<div class="nrow " style="height:94px">11</div>
<div class="nrow " style="height:94px">12</div>
<div class="nrow alt" style="height:106px">13</div>
<div class="nrow alt" style="height:94px">14</div>
<div class="nrow " style="height:94px">15</div>
<div class="nrow alt" style="height:94px">16</div>
<div class="nrow " style="height:94px">17</div>
</div>
<div id="gbody">
<div class="row " style="height:94px"><div class="c c1"><span class="cb"></span></div><div class="c c2"><span class="tag g">未开工</span></div><div class="c c3" style="padding-left:56px"><svg class="wdoc" width="24" height="28" preserveAspectRatio="none" viewBox="0 0 24 28"><path d="M5 2H13L22 11V23a3 3 0 0 1-3 3H5a3 3 0 0 1-3-3V5a3 3 0 0 1 3-3z" fill="#fff" stroke="#283593" stroke-width="4" stroke-linejoin="round"/><path d="M12.500 3V11.500H21z" fill="#283593" stroke="#283593" stroke-width="3" stroke-linejoin="round"/><circle cx="15.200" cy="8.800" r="1.100" fill="#aab4f5"/></svg><span class="pill ms">里程碑</span><span class="wn">1</span></div><div class="c c4 l"><span>SOP</span></div><div class="c c5 l"><span></span></div><div class="c c6">0</div><div class="c c7"></div><div class="c c8 pre"><span></span></div><div class="c c9"></div><div class="c c10">2021<span class="d">–</span>10<span class="d">–</span>15</div><div class="c c11">1</div><div class="c c12">2021<span class="d">–</span>10<span class="d">–</span>15</div></div>
<div class="row alt" style="height:94px"><div class="c c1"><span class="cb"></span></div><div class="c c2"><span class="tag r">已开工</span></div><div class="c c3" style="padding-left:56px"><svg class="wdoc" width="24" height="28" preserveAspectRatio="none" viewBox="0 0 24 28"><path d="M5 2H13L22 11V23a3 3 0 0 1-3 3H5a3 3 0 0 1-3-3V5a3 3 0 0 1 3-3z" fill="#fff" stroke="#283593" stroke-width="4" stroke-linejoin="round"/><path d="M12.500 3V11.500H21z" fill="#283593" stroke="#283593" stroke-width="3" stroke-linejoin="round"/><circle cx="15.200" cy="8.800" r="1.100" fill="#aab4f5"/></svg><span class="pill tk">任务</span><span class="wn">2</span></div><div class="c c4 l"><span>设计验证（DVP&amp;R）</span></div><div class="c c5 l"><span>技术部(火花塞)</span></div><div class="c c6">0</div><div class="c c7">李建桥</div><div class="c c8 pre"><span></span></div><div class="c c9"><svg class="clip" width="28" height="26" viewBox="0 0 28 26"><g transform="rotate(-40 14 13)"><rect x="2" y="7.5" width="24" height="11" rx="5.5" fill="#c9d0f5" stroke="#5a66b4" stroke-width="2.6"/><path d="M7 13H22" stroke="#5a66b4" stroke-width="2.4" stroke-linecap="round"/><path d="M9 10.6H21" stroke="#e9ecff" stroke-width="1.4" stroke-linecap="round"/></g></svg></div><div class="c c10">2021<span class="d">–</span>02<span class="d">–</span>01</div><div class="c c11">22</div><div class="c c12">2021<span class="d">–</span>03<span class="d">–</span>02</div></div>
<div class="row " style="height:94px"><div class="c c1"><span class="cb"></span></div><div class="c c2"><span class="tag g">未开工</span></div><div class="c c3" style="padding-left:56px"><svg class="wdoc" width="24" height="28" preserveAspectRatio="none" viewBox="0 0 24 28"><path d="M5 2H13L22 11V23a3 3 0 0 1-3 3H5a3 3 0 0 1-3-3V5a3 3 0 0 1 3-3z" fill="#fff" stroke="#283593" stroke-width="4" stroke-linejoin="round"/><path d="M12.500 3V11.500H21z" fill="#283593" stroke="#283593" stroke-width="3" stroke-linejoin="round"/><circle cx="15.200" cy="8.800" r="1.100" fill="#aab4f5"/></svg><span class="pill tk">任务</span><span class="wn">3</span></div><div class="c c4 l"><span>DFMEA</span></div><div class="c c5 l"><span>技术部(火花塞)</span></div><div class="c c6">0</div><div class="c c7">李建桥</div><div class="c c8 pre"><span></span></div><div class="c c9"><svg class="clip" width="28" height="26" viewBox="0 0 28 26"><g transform="rotate(-40 14 13)"><rect x="2" y="7.5" width="24" height="11" rx="5.5" fill="#c9d0f5" stroke="#5a66b4" stroke-width="2.6"/><path d="M7 13H22" stroke="#5a66b4" stroke-width="2.4" stroke-linecap="round"/><path d="M9 10.6H21" stroke="#e9ecff" stroke-width="1.4" stroke-linecap="round"/></g></svg></div><div class="c c10">2021<span class="d">–</span>08<span class="d">–</span>23</div><div class="c c11">5</div><div class="c c12">2021<span class="d">–</span>08<span class="d">–</span>27</div></div>
<div class="row sel" style="height:94px"><div class="c c1"><span class="cb on"><svg width="30" height="30" viewBox="0 0 30 30"><path d="M6.5 15.5L12.5 21.5L23.5 8.5" fill="none" stroke="#fff" stroke-width="4.2"/></svg></span></div><div class="c c2"><span class="tag r">已开工</span></div><div class="c c3" style="padding-left:56px"><svg class="wdoc" width="24" height="28" preserveAspectRatio="none" viewBox="0 0 24 28"><path d="M5 2H13L22 11V23a3 3 0 0 1-3 3H5a3 3 0 0 1-3-3V5a3 3 0 0 1 3-3z" fill="#fff" stroke="#283593" stroke-width="4" stroke-linejoin="round"/><path d="M12.500 3V11.500H21z" fill="#283593" stroke="#283593" stroke-width="3" stroke-linejoin="round"/><circle cx="15.200" cy="8.800" r="1.100" fill="#aab4f5"/></svg><span class="pill tk">任务</span><span class="wn">4</span></div><div class="c c4 l"><span>匹配性实验</span></div><div class="c c5 l"><span>技术部(火花塞)</span></div><div class="c c6">0</div><div class="c c7">李建桥</div><div class="c c8 pre"><span></span></div><div class="c c9"><svg class="clip" width="28" height="26" viewBox="0 0 28 26"><g transform="rotate(-40 14 13)"><rect x="2" y="7.5" width="24" height="11" rx="5.5" fill="#c9d0f5" stroke="#5a66b4" stroke-width="2.6"/><path d="M7 13H22" stroke="#5a66b4" stroke-width="2.4" stroke-linecap="round"/><path d="M9 10.6H21" stroke="#e9ecff" stroke-width="1.4" stroke-linecap="round"/></g></svg></div><div class="c c10">2020<span class="d">–</span>11<span class="d">–</span>23</div><div class="c c11">5</div><div class="c c12">2020<span class="d">–</span>11<span class="d">–</span>27</div></div>
<div class="row " style="height:94px"><div class="c c1"><span class="cb"></span></div><div class="c c2"><span class="tag r">已开工</span></div><div class="c c3" style="padding-left:56px"><svg class="wdoc" width="24" height="28" preserveAspectRatio="none" viewBox="0 0 24 28"><path d="M5 2H13L22 11V23a3 3 0 0 1-3 3H5a3 3 0 0 1-3-3V5a3 3 0 0 1 3-3z" fill="#fff" stroke="#283593" stroke-width="4" stroke-linejoin="round"/><path d="M12.500 3V11.500H21z" fill="#283593" stroke="#283593" stroke-width="3" stroke-linejoin="round"/><circle cx="15.200" cy="8.800" r="1.100" fill="#aab4f5"/></svg><span class="pill tk">任务</span><span class="wn">5</span></div><div class="c c4 l"><span>耐久件分析</span></div><div class="c c5 l"><span>技术部(火花塞)</span></div><div class="c c6">0</div><div class="c c7">李建桥</div><div class="c c8 pre"><span></span></div><div class="c c9"><svg class="clip" width="28" height="26" viewBox="0 0 28 26"><g transform="rotate(-40 14 13)"><rect x="2" y="7.5" width="24" height="11" rx="5.5" fill="#c9d0f5" stroke="#5a66b4" stroke-width="2.6"/><path d="M7 13H22" stroke="#5a66b4" stroke-width="2.4" stroke-linecap="round"/><path d="M9 10.6H21" stroke="#e9ecff" stroke-width="1.4" stroke-linecap="round"/></g></svg></div><div class="c c10">2020<span class="d">–</span>12<span class="d">–</span>17</div><div class="c c11">22</div><div class="c c12">2021<span class="d">–</span>01<span class="d">–</span>15</div></div>
<div class="row alt" style="height:106px"><div class="c c1"><span class="cb"></span></div><div class="c c2"><span class="tag r">已开工</span></div><div class="c c3" style="padding-left:56px"><svg class="wdoc" width="24" height="28" preserveAspectRatio="none" viewBox="0 0 24 28"><path d="M5 2H13L22 11V23a3 3 0 0 1-3 3H5a3 3 0 0 1-3-3V5a3 3 0 0 1 3-3z" fill="#fff" stroke="#283593" stroke-width="4" stroke-linejoin="round"/><path d="M12.500 3V11.500H21z" fill="#283593" stroke="#283593" stroke-width="3" stroke-linejoin="round"/><circle cx="15.200" cy="8.800" r="1.100" fill="#aab4f5"/></svg><span class="pill tk">任务</span><span class="wn">6</span></div><div class="c c4 l"><span>式样提示票（承认用）</span></div><div class="c c5 l"><span>技术部(火花塞)</span></div><div class="c c6">0</div><div class="c c7">李建桥</div><div class="c c8 pre"><span>匹配性实验<br>(FS,1)</span></div><div class="c c9"><svg class="clip" width="28" height="26" viewBox="0 0 28 26"><g transform="rotate(-40 14 13)"><rect x="2" y="7.5" width="24" height="11" rx="5.5" fill="#c9d0f5" stroke="#5a66b4" stroke-width="2.6"/><path d="M7 13H22" stroke="#5a66b4" stroke-width="2.4" stroke-linecap="round"/><path d="M9 10.6H21" stroke="#e9ecff" stroke-width="1.4" stroke-linecap="round"/></g></svg></div><div class="c c10">2021<span class="d">–</span>01<span class="d">–</span>19</div><div class="c c11">10</div><div class="c c12">2021<span class="d">–</span>02<span class="d">–</span>01</div></div>
<div class="row " style="height:142px"><div class="c c1"><span class="cb"></span></div><div class="c c2"><span class="tag r">已开工</span></div><div class="c c3" style="padding-left:56px"><svg class="wdoc" width="24" height="28" preserveAspectRatio="none" viewBox="0 0 24 28"><path d="M5 2H13L22 11V23a3 3 0 0 1-3 3H5a3 3 0 0 1-3-3V5a3 3 0 0 1 3-3z" fill="#fff" stroke="#283593" stroke-width="4" stroke-linejoin="round"/><path d="M12.500 3V11.500H21z" fill="#283593" stroke="#283593" stroke-width="3" stroke-linejoin="round"/><circle cx="15.200" cy="8.800" r="1.100" fill="#aab4f5"/></svg><span class="pill tk">任务</span><span class="wn">7</span></div><div class="c c4 l"><span>客户承认图纸认可</span></div><div class="c c5 l"><span>技术部(火花塞)</span></div><div class="c c6">0</div><div class="c c7">李建桥</div><div class="c c8 pre"><span>式样提示票<br>（承认用）<br>(FS,1)</span></div><div class="c c9"></div><div class="c c10">2021<span class="d">–</span>02<span class="d">–</span>03</div><div class="c c11">10</div><div class="c c12">2021<span class="d">–</span>02<span class="d">–</span>17</div></div>
<div class="row hov" style="height:106px"><div class="c c1"><span class="cb"></span></div><div class="c c2"><span class="tag g">已完工</span></div><div class="c c3" style="padding-left:56px"><svg class="wdoc" width="24" height="28" preserveAspectRatio="none" viewBox="0 0 24 28"><path d="M5 2H13L22 11V23a3 3 0 0 1-3 3H5a3 3 0 0 1-3-3V5a3 3 0 0 1 3-3z" fill="#fff" stroke="#283593" stroke-width="4" stroke-linejoin="round"/><path d="M12.500 3V11.500H21z" fill="#283593" stroke="#283593" stroke-width="3" stroke-linejoin="round"/><circle cx="15.200" cy="8.800" r="1.100" fill="#aab4f5"/></svg><span class="pill tk">任务</span><span class="wn">8</span></div><div class="c c4 l"><span>营业发行量产准备书状</span></div><div class="c c5 l"><span>上海OEM营业部（实业）</span></div><div class="c c6">10</div><div class="c c7">叶鹏</div><div class="c c8 pre"><span>客户承认图纸<br>认可(FS,1)</span></div><div class="c c9"><svg class="clip" width="28" height="26" viewBox="0 0 28 26"><g transform="rotate(-40 14 13)"><rect x="2" y="7.5" width="24" height="11" rx="5.5" fill="#c9d0f5" stroke="#5a66b4" stroke-width="2.6"/><path d="M7 13H22" stroke="#5a66b4" stroke-width="2.4" stroke-linecap="round"/><path d="M9 10.6H21" stroke="#e9ecff" stroke-width="1.4" stroke-linecap="round"/></g></svg></div><div class="c c10">2021<span class="d">–</span>02<span class="d">–</span>18</div><div class="c c11">5</div><div class="c c12">2021<span class="d">–</span>02<span class="d">–</span>24</div></div>
<div class="row " style="height:106px"><div class="c c1"><span class="cb"></span></div><div class="c c2"><span class="tag r">已开工</span></div><div class="c c3" style="padding-left:56px"><svg class="wdoc" width="24" height="28" preserveAspectRatio="none" viewBox="0 0 24 28"><path d="M5 2H13L22 11V23a3 3 0 0 1-3 3H5a3 3 0 0 1-3-3V5a3 3 0 0 1 3-3z" fill="#fff" stroke="#283593" stroke-width="4" stroke-linejoin="round"/><path d="M12.500 3V11.500H21z" fill="#283593" stroke="#283593" stroke-width="3" stroke-linejoin="round"/><circle cx="15.200" cy="8.800" r="1.100" fill="#aab4f5"/></svg><span class="pill tk">任务</span><span class="wn">9</span></div><div class="c c4 l"><span>式样确认票</span></div><div class="c c5 l"><span>技术部(火花塞)</span></div><div class="c c6">10</div><div class="c c7">李建桥</div><div class="c c8 pre"><span>客户承认图纸<br>认可(FS,1)</span></div><div class="c c9"><svg class="clip" width="28" height="26" viewBox="0 0 28 26"><g transform="rotate(-40 14 13)"><rect x="2" y="7.5" width="24" height="11" rx="5.5" fill="#c9d0f5" stroke="#5a66b4" stroke-width="2.6"/><path d="M7 13H22" stroke="#5a66b4" stroke-width="2.4" stroke-linecap="round"/><path d="M9 10.6H21" stroke="#e9ecff" stroke-width="1.4" stroke-linecap="round"/></g></svg></div><div class="c c10">2021<span class="d">–</span>02<span class="d">–</span>18</div><div class="c c11">3</div><div class="c c12">2021<span class="d">–</span>02<span class="d">–</span>22</div></div>
<div class="row alt" style="height:94px"><div class="c c1"><span class="cb"></span></div><div class="c c2"><span class="tag g">未开工</span></div><div class="c c3" style="padding-left:56px"><svg class="wdoc" width="24" height="28" preserveAspectRatio="none" viewBox="0 0 24 28"><path d="M5 2H13L22 11V23a3 3 0 0 1-3 3H5a3 3 0 0 1-3-3V5a3 3 0 0 1 3-3z" fill="#fff" stroke="#283593" stroke-width="4" stroke-linejoin="round"/><path d="M12.500 3V11.500H21z" fill="#283593" stroke="#283593" stroke-width="3" stroke-linejoin="round"/><circle cx="15.200" cy="8.800" r="1.100" fill="#aab4f5"/></svg><span class="pill tk">任务</span><span class="wn">10</span></div><div class="c c4 l"><span>首次出货</span></div><div class="c c5 l"><span>SCM部（上海）</span></div><div class="c c6">0</div><div class="c c7">何丽萍</div><div class="c c8 pre"><span></span></div><div class="c c9"></div><div class="c c10">2021<span class="d">–</span>07<span class="d">–</span>26</div><div class="c c11">1</div><div class="c c12">2021<span class="d">–</span>07<span class="d">–</span>26</div></div>
<div class="row " style="height:94px"><div class="c c1"><span class="cb"></span></div><div class="c c2"><span class="tag r">未开工</span></div><div class="c c3" style="padding-left:53px"><span class="wa"><svg class="arr" width="12" height="12" viewBox="0 0 12 12"><path d="M12 0V12H0z" fill="#333"/></svg></span><svg class="wfold" width="29" height="24" viewBox="0 0 29 24"><path d="M1 0H12L15 4H24V8H6V23H1z" fill="#2e3a9e"/><rect x="6" y="9" width="23" height="15" rx="1.5" fill="#2e3a9e" stroke="#dfe4fb" stroke-width="1.6"/></svg><span class="pill gp">分组</span><span class="wn">11</span></div><div class="c c4 l"><span>物流相关确认</span></div><div class="c c5 l"><span></span></div><div class="c c6">10</div><div class="c c7"></div><div class="c c8 pre"><span></span></div><div class="c c9"></div><div class="c c10">2021<span class="d">–</span>04<span class="d">–</span>26</div><div class="c c11">48</div><div class="c c12">2021<span class="d">–</span>06<span class="d">–</span>30</div></div>
<div class="row " style="height:94px"><div class="c c1"><span class="cb"></span></div><div class="c c2"><span class="tag g">未开工</span></div><div class="c c3" style="padding-left:88px"><svg class="wdoc" width="24" height="28" preserveAspectRatio="none" viewBox="0 0 24 28"><path d="M5 2H13L22 11V23a3 3 0 0 1-3 3H5a3 3 0 0 1-3-3V5a3 3 0 0 1 3-3z" fill="#fff" stroke="#283593" stroke-width="4" stroke-linejoin="round"/><path d="M12.500 3V11.500H21z" fill="#283593" stroke="#283593" stroke-width="3" stroke-linejoin="round"/><circle cx="15.200" cy="8.800" r="1.100" fill="#aab4f5"/></svg><span class="pill tk">任务</span><span class="wn">11.1</span></div><div class="c c4 l"><span>量产包装确认</span></div><div class="c c5 l"><span>SCM部（实业）</span></div><div class="c c6">0</div><div class="c c7">许腾宇</div><div class="c c8 pre"><span></span></div><div class="c c9"><svg class="clip" width="28" height="26" viewBox="0 0 28 26"><g transform="rotate(-40 14 13)"><rect x="2" y="7.5" width="24" height="11" rx="5.5" fill="#c9d0f5" stroke="#5a66b4" stroke-width="2.6"/><path d="M7 13H22" stroke="#5a66b4" stroke-width="2.4" stroke-linecap="round"/><path d="M9 10.6H21" stroke="#e9ecff" stroke-width="1.4" stroke-linecap="round"/></g></svg></div><div class="c c10">2021<span class="d">–</span>06<span class="d">–</span>30</div><div class="c c11">1</div><div class="c c12">2021<span class="d">–</span>06<span class="d">–</span>30</div></div>
<div class="row alt" style="height:106px"><div class="c c1"><span class="cb"></span></div><div class="c c2"><span class="tag r">未开工</span></div><div class="c c3" style="padding-left:88px"><svg class="wdoc" width="24" height="28" preserveAspectRatio="none" viewBox="0 0 24 28"><path d="M5 2H13L22 11V23a3 3 0 0 1-3 3H5a3 3 0 0 1-3-3V5a3 3 0 0 1 3-3z" fill="#fff" stroke="#283593" stroke-width="4" stroke-linejoin="round"/><path d="M12.500 3V11.500H21z" fill="#283593" stroke="#283593" stroke-width="3" stroke-linejoin="round"/><circle cx="15.200" cy="8.800" r="1.100" fill="#aab4f5"/></svg><span class="pill tk">任务</span><span class="wn">11.2</span></div><div class="c c4 l"><span>物流模式确认（包含中间<br>仓）</span></div><div class="c c5 l"><span>SCM部（实业）</span></div><div class="c c6">0</div><div class="c c7">许腾宇</div><div class="c c8 pre"><span></span></div><div class="c c9"><svg class="clip" width="28" height="26" viewBox="0 0 28 26"><g transform="rotate(-40 14 13)"><rect x="2" y="7.5" width="24" height="11" rx="5.5" fill="#c9d0f5" stroke="#5a66b4" stroke-width="2.6"/><path d="M7 13H22" stroke="#5a66b4" stroke-width="2.4" stroke-linecap="round"/><path d="M9 10.6H21" stroke="#e9ecff" stroke-width="1.4" stroke-linecap="round"/></g></svg></div><div class="c c10">2021<span class="d">–</span>04<span class="d">–</span>26</div><div class="c c11">45</div><div class="c c12">2021<span class="d">–</span>06<span class="d">–</span>25</div></div>
<div class="row alt" style="height:94px"><div class="c c1"><span class="cb"></span></div><div class="c c2"><span class="tag r">未开工</span></div><div class="c c3" style="padding-left:56px"><svg class="wdoc" width="24" height="28" preserveAspectRatio="none" viewBox="0 0 24 28"><path d="M5 2H13L22 11V23a3 3 0 0 1-3 3H5a3 3 0 0 1-3-3V5a3 3 0 0 1 3-3z" fill="#fff" stroke="#283593" stroke-width="4" stroke-linejoin="round"/><path d="M12.500 3V11.500H21z" fill="#283593" stroke="#283593" stroke-width="3" stroke-linejoin="round"/><circle cx="15.200" cy="8.800" r="1.100" fill="#aab4f5"/></svg><span class="pill tk">任务</span><span class="wn">12</span></div><div class="c c4 l"><span>IMDS/CAMDS</span></div><div class="c c5 l"><span>上海OEM营业部（实业）</span></div><div class="c c6">0</div><div class="c c7">叶鹏</div><div class="c c8 pre"><span></span></div><div class="c c9"></div><div class="c c10">2021<span class="d">–</span>05<span class="d">–</span>31</div><div class="c c11">1</div><div class="c c12">2021<span class="d">–</span>05<span class="d">–</span>31</div></div>
<div class="row " style="height:94px"><div class="c c1"><span class="cb"></span></div><div class="c c2"><span class="tag g">已开工</span></div><div class="c c3" style="padding-left:56px"><svg class="wdoc" width="24" height="28" preserveAspectRatio="none" viewBox="0 0 24 28"><path d="M5 2H13L22 11V23a3 3 0 0 1-3 3H5a3 3 0 0 1-3-3V5a3 3 0 0 1 3-3z" fill="#fff" stroke="#283593" stroke-width="4" stroke-linejoin="round"/><path d="M12.500 3V11.500H21z" fill="#283593" stroke="#283593" stroke-width="3" stroke-linejoin="round"/><circle cx="15.200" cy="8.800" r="1.100" fill="#aab4f5"/></svg><span class="pill tk">任务</span><span class="wn">13</span></div><div class="c c4 l"><span>ELV</span></div><div class="c c5 l"><span>品证部（上海）</span></div><div class="c c6">0</div><div class="c c7">王卿</div><div class="c c8 pre"><span></span></div><div class="c c9"><svg class="clip" width="28" height="26" viewBox="0 0 28 26"><g transform="rotate(-40 14 13)"><rect x="2" y="7.5" width="24" height="11" rx="5.5" fill="#c9d0f5" stroke="#5a66b4" stroke-width="2.6"/><path d="M7 13H22" stroke="#5a66b4" stroke-width="2.4" stroke-linecap="round"/><path d="M9 10.6H21" stroke="#e9ecff" stroke-width="1.4" stroke-linecap="round"/></g></svg></div><div class="c c10">2021<span class="d">–</span>06<span class="d">–</span>30</div><div class="c c11">1</div><div class="c c12">2021<span class="d">–</span>06<span class="d">–</span>30</div></div>
<div class="row alt" style="height:94px"><div class="c c1"><span class="cb"></span></div><div class="c c2"><span class="tag g">已开工</span></div><div class="c c3" style="padding-left:56px"><svg class="wdoc" width="24" height="28" preserveAspectRatio="none" viewBox="0 0 24 28"><path d="M5 2H13L22 11V23a3 3 0 0 1-3 3H5a3 3 0 0 1-3-3V5a3 3 0 0 1 3-3z" fill="#fff" stroke="#283593" stroke-width="4" stroke-linejoin="round"/><path d="M12.500 3V11.500H21z" fill="#283593" stroke="#283593" stroke-width="3" stroke-linejoin="round"/><circle cx="15.200" cy="8.800" r="1.100" fill="#aab4f5"/></svg><span class="pill tk">任务</span><span class="wn">14</span></div><div class="c c4 l"><span>客户工程监察</span></div><div class="c c5 l"><span>品证部（上海）</span></div><div class="c c6">0</div><div class="c c7">王卿</div><div class="c c8 pre"><span></span></div><div class="c c9"></div><div class="c c10">2021<span class="d">–</span>06<span class="d">–</span>30</div><div class="c c11">1</div><div class="c c12">2021<span class="d">–</span>06<span class="d">–</span>30</div></div>
<div class="row " style="height:94px"><div class="c c1"><span class="cb"></span></div><div class="c c2"><span class="tag g">已开工</span></div><div class="c c3" style="padding-left:56px"><svg class="wdoc" width="24" height="28" preserveAspectRatio="none" viewBox="0 0 24 28"><path d="M5 2H13L22 11V23a3 3 0 0 1-3 3H5a3 3 0 0 1-3-3V5a3 3 0 0 1 3-3z" fill="#fff" stroke="#283593" stroke-width="4" stroke-linejoin="round"/><path d="M12.500 3V11.500H21z" fill="#283593" stroke="#283593" stroke-width="3" stroke-linejoin="round"/><circle cx="15.200" cy="8.800" r="1.100" fill="#aab4f5"/></svg><span class="pill tk">任务</span><span class="wn">15</span></div><div class="c c4 l"><span>PPAP提交及认可</span></div><div class="c c5 l"><span>品证部（上海）</span></div><div class="c c6">10</div><div class="c c7">王卿</div><div class="c c8 pre"><span></span></div><div class="c c9"><svg class="clip" width="28" height="26" viewBox="0 0 28 26"><g transform="rotate(-40 14 13)"><rect x="2" y="7.5" width="24" height="11" rx="5.5" fill="#c9d0f5" stroke="#5a66b4" stroke-width="2.6"/><path d="M7 13H22" stroke="#5a66b4" stroke-width="2.4" stroke-linecap="round"/><path d="M9 10.6H21" stroke="#e9ecff" stroke-width="1.4" stroke-linecap="round"/></g></svg></div><div class="c c10">2021<span class="d">–</span>02<span class="d">–</span>09</div><div class="c c11">20</div><div class="c c12">2021<span class="d">–</span>03<span class="d">–</span>08</div></div>
</div>
<div id="vscroll"><div id="vthumb"></div></div>
<div id="hscroll"><div id="hthumb"></div></div>
<div id="gbot"></div>
</div>
<div id="btabs" class="abs"></div>
<div id="bt1" class="abs">项目进度计划</div>
<div id="bt2" class="abs">甘特图</div>
</div>
</body>
</html>
